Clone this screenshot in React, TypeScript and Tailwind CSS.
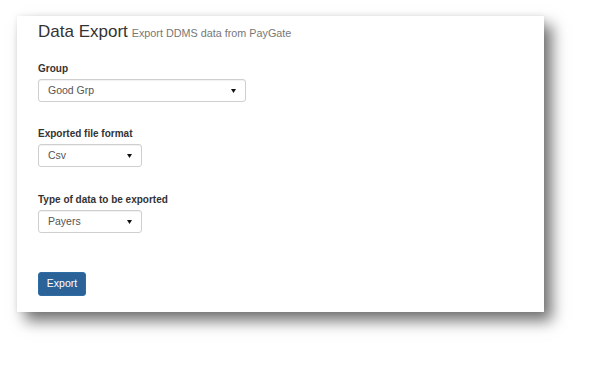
import React from "react";

function Caret() {
  return (
    <svg width="5" height="4" viewBox="0 0 5 4" className="shrink-0">
      <path d="M0 0 H5 L2.5 4 Z" fill="#111" />
    </svg>
  );
}

function FakeSelect({ value, width }: { value: string; width: string }) {
  return (
    <div
      className={`${width} h-[23px] flex items-center justify-between pl-[9px] pr-[9px] border border-[#cfcfcf] rounded-[3px] bg-white shadow-[inset_0_1px_1px_rgba(0,0,0,0.06)] text-[10.5px] text-[#555]`}
    >
      <span>{value}</span>
      <Caret />
    </div>
  );
}

function Field({ label, value, width, top }: { label: string; value: string; width: string; top: string }) {
  return (
    <div className={`flex flex-col ${top}`}>
      <label className="h-[12px] leading-[12px] text-[10px] font-bold text-[#333]">{label}</label>
      <div className="mt-[4px]">
        <FakeSelect value={value} width={width} />
      </div>
    </div>
  );
}

export default function App() {
  return (
    <div className="w-[595px] h-[365px] bg-white pt-[16px] pl-[17px] font-['Liberation_Sans',Arial,sans-serif]">
      <div className="w-[527px] h-[296px] bg-white pl-[21px] pt-[6px] shadow-[8px_9px_14px_rgba(0,0,0,0.55),0_0_5px_rgba(0,0,0,0.08)]">
        <div className="flex items-baseline gap-[4px] h-[20px] leading-[20px]">
          <h1 className="text-[17px] text-[#333]">Data Export</h1>
          <span className="text-[10.8px] text-[#777]">Export DDMS data from PayGate</span>
        </div>

        <Field label="Group" value="Good Grp" width="w-[208px]" top="mt-[21px]" />
        <Field label="Exported file format" value="Csv" width="w-[104px]" top="mt-[26px]" />
        <Field label="Type of data to be exported" value="Payers" width="w-[104px]" top="mt-[27px]" />

        <button className="mt-[39px] w-[48px] h-[24px] rounded-[3px] bg-[#2b6298] border border-[#2e6da4] text-white text-[10.5px] flex items-center justify-center">
          Export
        </button>
      </div>
    </div>
  );
}
